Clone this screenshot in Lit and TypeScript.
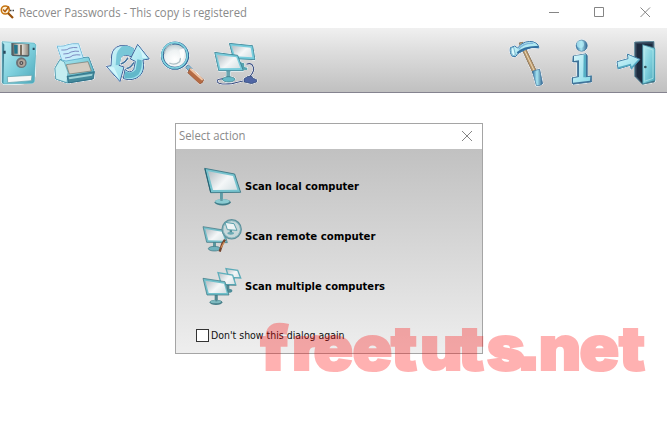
import { LitElement, html, svg, css } from "lit";
import { customElement } from "lit/decorators.js";

const defs = svg`<defs>
  <linearGradient id="aqua" x1="0" y1="0" x2="1" y2="1"><stop offset="0" stop-color="#b9ecf3"/><stop offset=".5" stop-color="#7fd0dd"/><stop offset="1" stop-color="#4ba6b9"/></linearGradient>
  <linearGradient id="pale" x1="0" y1="0" x2="1" y2="1"><stop offset="0" stop-color="#d6f6fb"/><stop offset="1" stop-color="#8bdbe8"/></linearGradient>
  <linearGradient id="screen" x1="0" y1=".2" x2="1" y2=".8"><stop offset="0" stop-color="#bcc4c9"/><stop offset=".55" stop-color="#f4f7f8"/><stop offset="1" stop-color="#d9e3e6"/></linearGradient>
  <linearGradient id="metal" x1="0" y1="0" x2="1" y2="0"><stop offset="0" stop-color="#8d8577"/><stop offset=".5" stop-color="#f1eee9"/><stop offset="1" stop-color="#8e887c"/></linearGradient>
  <linearGradient id="blue" x1="0" y1="0" x2="1" y2="0"><stop offset="0" stop-color="#2f6fa3"/><stop offset=".45" stop-color="#a9e6f2"/><stop offset="1" stop-color="#2f628f"/></linearGradient>
  <radialGradient id="lens" cx=".5" cy=".65" r=".6"><stop offset="0" stop-color="#ffffff"/><stop offset=".6" stop-color="#eef2f3"/><stop offset="1" stop-color="#bccbd0"/></radialGradient>
</defs>`;

const floppy = svg`
  <path d="M6 47 L102 51 L108 57 L103 167 L98 172 L10 174 L6 169Z" fill="url(#aqua)" stroke="#58a9b8" stroke-width="2"/>
  <path d="M7 49V170L10 173L13 56Z" fill="#3f8296"/>
  <path d="M34 51L88 54V88Q87 92 82 92L38 90Q34 89 34 85Z" fill="#516067"/>
  <path d="M40 53L85 55V87L41 86Z" fill="url(#metal)"/>
  <path d="M42 56L53 57V83H43Z" fill="#23758c"/>
  <path d="M60 56H66V87H60Z" fill="#7b6f60"/>
  <circle cx="64" cy="110" r="16" fill="#6e7377"/><circle cx="65" cy="111" r="11" fill="#b1a59a"/><circle cx="64" cy="111" r="6" fill="#514f52"/><circle cx="64" cy="111" r="2" fill="#ddd"/>
  <path d="M22 152L96 148L94 164L23 170Z" fill="#f6f7f6" stroke="#5d9da8" stroke-width="2"/>
  <path d="M10 74h7v9h-7zM98 65h6v7h-6z" fill="#27485d"/>`;

const printer = svg`
  <path d="M168 126L183 100L269 93L286 137L280 160L204 171L170 159Z" fill="url(#aqua)" stroke="#347c96" stroke-width="2.5"/>
  <path d="M168 126L183 101L196 108L207 139L204 170L170 159Z" fill="#c4edf0" stroke="#4d99ad" stroke-width="2"/>
  <path d="M174 60Q197 61 202 57Q220 51 239 53L253 96L201 105L188 102Z" fill="#c8edfb" stroke="#489fc4" stroke-width="2"/>
  <path d="M187 72Q205 73 210 67Q224 63 235 65M193 84Q211 84 216 78Q229 74 240 76M198 96Q216 95 222 88Q234 85 244 87" fill="none" stroke="#6d77b4" stroke-width="2.5"/>
  <path d="M202 116L267 107L277 135L211 144Z" fill="#d3ccc1" stroke="#7c7468" stroke-width="2"/>
  <path d="M204 151L286 137L284 158L209 171Z" fill="#43899b" stroke="#22637b" stroke-width="2"/>
  <path d="M209 154L281 143L279 149L211 160Z" fill="#9fd2d7"/>`;

const refresh = svg`
  <path d="M36 107L38 75Q41 53 63 47Q86 43 104 56L96 80Q76 70 64 83L60 106L75 111L63 155L22 109Z" fill="url(#pale)" stroke="#43619a" stroke-width="3" stroke-linejoin="round"/>
  <path d="M70 49Q88 44 106 56L98 79Q82 71 68 80L62 104L50 106L52 80Q53 61 70 49Z" fill="#78c7d8"/>
  <path d="M116 43L151 87L132 90Q139 121 122 138Q102 155 73 146L78 118Q93 132 104 119L109 94L94 87Z" fill="url(#pale)" stroke="#40669b" stroke-width="3" stroke-linejoin="round"/>
  <path d="M79 124Q99 133 110 119L115 88L128 91Q131 116 118 134Q99 149 76 143Z" fill="#62b8ca"/>
  <path d="M65 102Q80 97 87 83M82 115Q93 116 105 97" fill="none" stroke="#44749d" stroke-width="5"/>
  <path d="M116 48L145 84L130 84Q130 70 116 48ZM27 111L45 112L61 147Z" fill="#d2f6fc"/>`;

const magnifier = svg`
  <path d="M170 124L178 116L190 128L181 138Z" fill="#83bad1" stroke="#356691" stroke-width="2"/>
  <path d="M183 127L224 161Q223 171 212 174L176 140Z" fill="#b66b43" stroke="#824d38" stroke-width="2"/>
  <path d="M185 130L219 160" stroke="#edc4a5" stroke-width="6" stroke-linecap="round"/>
  <circle cx="138" cy="89" r="38" fill="url(#lens)" stroke="#316596" stroke-width="9"/>
  <circle cx="137" cy="88" r="38" fill="none" stroke="#83d4df" stroke-width="5"/>
  <path d="M106 84Q107 61 130 55M121 111Q137 119 152 107L155 96" fill="none" stroke="#aebfc5" stroke-width="4"/>
  <path d="M151 71L166 67Q171 91 157 105Z" fill="#fff" opacity=".9"/>`;

const network = svg`
  <path d="M330 107L346 112V123L355 125V132L330 131Z" fill="#57a3af"/>
  <path d="M301 52L371 59L378 101L313 98Z" fill="#77cddd" stroke="#397f91" stroke-width="2.5"/><path d="M308 59L365 65L370 94L318 91Z" fill="url(#screen)"/>
  <path d="M296 158Q261 157 265 167Q270 177 309 173Q326 169 342 165M362 152Q379 135 372 121Q367 109 352 115" fill="none" stroke="#3c4f80" stroke-width="3.5"/>
  <path d="M345 158L357 151H369L371 156L383 161V168L368 173L345 168Z" fill="#5066a4" stroke="#29416d" stroke-width="2"/>
  <path d="M292 134H304V155H292Z" fill="#69a5b0"/><ellipse cx="299" cy="160" rx="19" ry="8" fill="#65bac8" stroke="#326e7c" stroke-width="2"/>
  <path d="M257 79L326 88L343 134L269 134Z" fill="#7bcddc" stroke="#397f91" stroke-width="2.5"/><path d="M264 87L322 94L334 126L274 127Z" fill="url(#screen)"/>`;

const hammer = svg`
  <path d="M87 51L98 48L141 138L130 144Z" fill="#bd9a6c" stroke="#685744" stroke-width="2"/><path d="M94 53L134 137" stroke="#ead9b9" stroke-width="3"/>
  <path d="M127 136L149 129L158 173Q151 181 139 179Z" fill="url(#blue)" stroke="#386b94" stroke-width="2"/>
  <path d="M61 65L74 60L83 66Q91 53 107 48Q133 42 144 57L147 66Q125 60 106 71L83 83L78 91L68 92Q58 82 61 65Z" fill="url(#pale)" stroke="#3974a5" stroke-width="3"/>
  <path d="M82 81Q105 61 144 63" fill="none" stroke="#326fa0" stroke-width="6"/><path d="M86 70Q100 50 130 52" fill="none" stroke="#7db8dc" stroke-width="4"/><path d="M63 66L71 64L76 86L69 90Q62 82 63 66Z" fill="#dafaff" stroke="#5098b8" stroke-width="2"/>`;

const info = svg`
  <circle cx="275" cy="59" r="17" fill="url(#blue)" stroke="#386c93" stroke-width="2"/><circle cx="271" cy="55" r="11" fill="#b2ebf4" opacity=".75"/>
  <path d="M249 90L288 83L292 89V151L305 149V168L249 175L246 170V155L262 152V108L248 108Z" fill="#40759c" stroke="#31678b" stroke-width="2" stroke-linejoin="round"/>
  <path d="M252 90L287 85V154L301 152L300 164L249 170V157L267 153V103L252 105Z" fill="url(#pale)"/>
  <path d="M281 87H288V154H280Z" fill="#56afc5"/>`;

const exit = svg`
  <path d="M434 48L492 46L494 168L457 175L434 151Z" fill="#35485d" stroke="#618b9b" stroke-width="3"/>
  <path d="M440 53H487V62L457 55V170L440 151Z" fill="#1d2b3e"/>
  <path d="M458 56L495 67V164L458 174Z" fill="url(#aqua)" stroke="#347b91" stroke-width="2"/>
  <path d="M463 64L489 72V157L463 166Z" fill="none" stroke="#b9ebed" stroke-width="2"/><circle cx="466" cy="123" r="4" fill="#34545d"/>
  <path d="M381 107L414 98L412 84L450 100L424 130L421 118L384 129Z" fill="url(#pale)" stroke="#427fa5" stroke-width="3" stroke-linejoin="round"/>
  <path d="M384 126L421 116L424 126L447 101" fill="none" stroke="#53a8c0" stroke-width="4"/>`;

const localPc = svg`
  <path d="M90 113H98V137H90Z" fill="#579da8"/><ellipse cx="98" cy="142" rx="24" ry="9.5" fill="#3f7b88"/><ellipse cx="97" cy="139" rx="22" ry="7" fill="#8bcbd2"/><path d="M90 113H98V138H91Z" fill="#609ca5"/>
  <path d="M44 40L134 57L152 112L62 113Z" fill="#77c3ce" stroke="#34717f" stroke-width="2.5" stroke-linejoin="round"/><path d="M54 49L129 63L142 104L69 105Z" fill="url(#screen)"/><path d="M45 41L62 112" stroke="#256070" stroke-width="3"/>`;

const remotePc = svg`
  <path d="M339 633h9v20h-9z" fill="#5b969e"/><ellipse cx="343" cy="656" rx="18" ry="7" fill="#70b2bd" stroke="#39717d" stroke-width="2"/>
  <path d="M309 590L371 600L382 638L320 637Z" fill="#74bec9" stroke="#396f7b" stroke-width="2"/><path d="M316 597L366 605L375 632L325 631Z" fill="url(#screen)"/>
  <path d="M375 629L367 641L359 665" fill="none" stroke="#74442d" stroke-width="7"/><path d="M373 636L363 653" stroke="#ce8a54" stroke-width="4"/>
  <circle cx="395" cy="598" r="28" fill="#c8d8da" stroke="#5d909b" stroke-width="5.5"/><circle cx="395" cy="598" r="26" fill="none" stroke="#9cc9cf" stroke-width="2"/>
  <path d="M389 596h7v13h-7z" fill="#4f8b95"/><ellipse cx="392" cy="610" rx="10" ry="4" fill="#68a9b4"/><path d="M375 577L402 581L411 601L382 599Z" fill="#edf3f4" stroke="#5aa0ac" stroke-width="3"/>`;

const multiPc = svg`
  <path d="M127 142h7v10h-7z" fill="#5b969e"/><path d="M108 116L143 121L152 144L116 142Z" fill="url(#screen)" stroke="#5baab7" stroke-width="4"/>
  <path d="M111 160h7v20h-7z" fill="#528791"/><ellipse cx="115" cy="182" rx="12" ry="6" fill="#4d8d99"/><path d="M84 128L128 135L137 164L94 163Z" fill="url(#screen)" stroke="#5fafbc" stroke-width="4"/><path d="M92 165L139 166" stroke="#326b77" stroke-width="2"/>
  <path d="M74 195h9v19h-9z" fill="#528791"/><ellipse cx="78" cy="217" rx="19" ry="8" fill="#477e88"/><ellipse cx="77" cy="215" rx="16" ry="5" fill="#7db9bf"/><path d="M76 196h6v18h-6z" fill="#528791"/>
  <path d="M39 145L105 155L117 195L51 195Z" fill="#70c0cb" stroke="#37707c" stroke-width="2"/><path d="M46 152L102 161L110 189L56 189Z" fill="url(#screen)"/>`;

const tool = (box: string, art: unknown) =>
  html`<button class="tool"><svg viewBox=${box}>${art}</svg></button>`;
const action = (box: string, art: unknown, label: string, len: number) =>
  html`<div class="action"><svg class="pc" viewBox=${box}>${art}</svg>
    <svg class="label" width="200" height="20"><text x="0" y="14" textLength=${len} lengthAdjust="spacingAndGlyphs">${label}</text></svg></div>`;

@customElement("app-root")
export class AppRoot extends LitElement {
  static styles = css`
    :host { display: block; position: relative; width: 667px; height: 444px; overflow: hidden; background: #fff; font-family: "Open Sans", "Noto Sans", sans-serif; }
    * { box-sizing: border-box; }
    svg { display: block; flex: none; }
    .defs { position: absolute; width: 0; height: 0; }
    .titlebar { display: flex; height: 28px; align-items: flex-start; }
    .logo { width: 16px; height: 20px; }
    .caption { fill: #8a8a8a; font-size: 12px; }
    .window-buttons { margin-left: auto; width: 119px; height: 26px; fill: none; stroke: #858585; }
    .toolbar { display: flex; height: 65px; padding: 8px 5px 0 0; background: linear-gradient(#f0f0f0, #dedede 35%, #c0c0c0); border-bottom: 1px solid #85838f; }
    .tool { width: 54px; height: 54px; padding: 0; border: 0; background: none; flex: none; }
    .tool svg { width: 54px; height: 54px; filter: drop-shadow(0 0 .5px #fff) drop-shadow(0 0 .6px #fff) drop-shadow(0 0 .6px #fff) drop-shadow(0 0 .4px #fff); }
    .tool:first-child { margin-left: -7px; }
    .gap { flex: 1; }
    .dialog { width: 308px; height: 231px; margin: 30px 0 0 175px; border: 1px solid #a5a5a5; display: flex; flex-direction: column; }
    .dialog-title { height: 25px; display: flex; justify-content: space-between; padding-left: 3px; background: #fff; }
    .close { width: 30px; height: 25px; fill: none; stroke: #858585; }
    .dialog-body { flex: 1; padding: 15px 0 0 24px; background: linear-gradient(#c1c1c1, #eee); }
    .action { display: flex; height: 50px; }
    .pc { width: 44px; height: 44px; }
    .label { margin: 12px 0 0 1px; }
    .label text { font-family: "DejaVu Sans", sans-serif; font-size: 11px; font-weight: bold; font-stretch: condensed; fill: #000; }
    .again { display: flex; align-items: center; height: 20px; margin: 11px 0 0 -4px; }
    .box { width: 13px; height: 13px; border: 1px solid #333; background: #fff; }
    .again text { font-family: "DejaVu Sans", sans-serif; font-size: 11px; font-stretch: condensed; fill: #111; }
    .again .text { margin-left: 2px; }
    .watermark { position: absolute; left: 252px; top: 290px; opacity: .3; pointer-events: none; }
    .watermark text { font: 900 61px Inter, sans-serif; fill: #f00; stroke: #f00; stroke-width: 2.2; }
    .watermark .dot { font-family: "Liberation Sans"; font-size: 86px; font-weight: bold; stroke-width: 2; }
  `;

  render() {
    return html`
      <svg class="defs">${defs}</svg>
      <header class="titlebar">
        <svg class="logo" viewBox="0 0 16 20"><circle cx="5.3" cy="10" r="4" fill="#fff5dd" stroke="#c87510" stroke-width="1.6"/><path d="M8 13l5 5" stroke="#99520c" stroke-width="2.2"/><path d="M3 9.5l2 2 4-5" fill="none" stroke="#b25f12" stroke-width="1.6"/><path d="M10 10.500h4" stroke="#444" stroke-width="1.500" stroke-dasharray="1.5 1"/></svg>
        <svg width="250" height="26"><text class="caption" x="3" y="17" textLength="228" lengthAdjust="spacingAndGlyphs">Recover Passwords - This copy is registered</text></svg>
        <svg class="window-buttons" viewBox="0 0 119 26"><path d="M1 12.500h10M46.500 7.500h9v9h-9z"/><path d="M92.500 7.500l9.500 9.500M102 7.500L92.500 17"/></svg>
      </header>
      <nav class="toolbar">
        ${tool("-21 30 162 162", floppy)}${tool("144 30 162 162", printer)}${tool("6 18 162 162", refresh)}${tool("78 30 162 162", magnifier)}${tool("240 30 162 162", network)}
        <span class="gap"></span>
        ${tool("30 30 162 162", hammer)}${tool("192 30 162 162", info)}${tool("354 30 162 162", exit)}
      </nav>
      <section class="dialog">
        <div class="dialog-title">
          <svg width="100" height="25"><text class="caption" x="0" y="16" textLength="66.500" lengthAdjust="spacingAndGlyphs">Select action</text></svg>
          <svg class="close" viewBox="0 0 30 25"><path d="M10 7l10 10M20 7l-10 10"/></svg>
        </div>
        <div class="dialog-body">
          ${action("30 27 132 132", localPc, "Scan local computer", 114)}
          ${action("300 552 132 132", remotePc, "Scan remote computer", 130.5)}
          ${action("30 102 132 132", multiPc, "Scan multiple computers", 140)}
          <label class="again"><span class="box"></span><svg class="text" width="140" height="20"><text x="0" y="14" textLength="133.500" lengthAdjust="spacingAndGlyphs">Don't show this dialog again</text></svg></label>
        </div>
      </section>
      <svg class="watermark" width="415" height="120"><text transform="scale(1.07 1)" y="80" x="8 37.500 57.500 94 130 157 192.500 219.500 246.500 268 306 343">freetuts<tspan class="dot">.</tspan>net</text></svg>
    `;
  }
}
